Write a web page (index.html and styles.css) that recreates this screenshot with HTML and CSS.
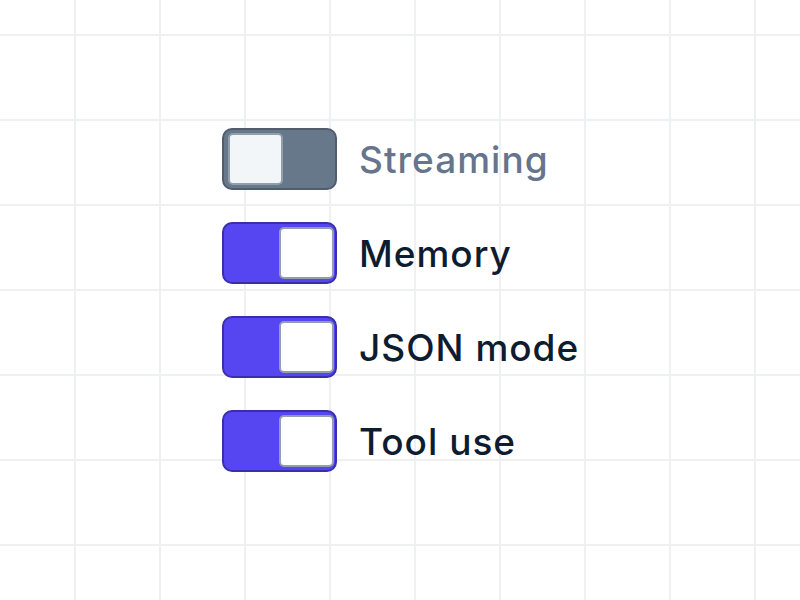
FILE: index.html
```html
<!DOCTYPE html>
<html>
<head>
<meta charset="utf-8">
<link rel="stylesheet" href="styles.css">
</head>
<body>
<div class="canvas">
  <ul class="list">
    <li class="row">
      <span class="toggle off"><span class="knob"></span></span>
      <span class="label muted">Streaming</span>
    </li>
    <li class="row">
      <span class="toggle on"><span class="knob"></span></span>
      <span class="label">Memory</span>
    </li>
    <li class="row">
      <span class="toggle on"><span class="knob"></span></span>
      <span class="label">JSON mode</span>
    </li>
    <li class="row">
      <span class="toggle on"><span class="knob"></span></span>
      <span class="label">Tool use</span>
    </li>
  </ul>
</div>
</body>
</html>
```
FILE: styles.css
```css
html, body {
  margin: 0;
  padding: 0;
}
body {
  width: 800px;
  height: 600px;
  background-color: #ffffff;
  background-image:
    linear-gradient(to right, #eef0f2 2px, transparent 2px),
    linear-gradient(to bottom, #eef0f2 2px, transparent 2px);
  background-size: 85px 85px;
  background-position: 74px 34px;
  font-family: Inter, "Noto Sans", sans-serif;
  overflow: hidden;
}
.canvas {
  padding: 128px 0 0 222px;
}
.list {
  list-style: none;
  margin: 0;
  padding: 0;
  display: flex;
  flex-direction: column;
  gap: 32px;
}
.row {
  display: flex;
  align-items: center;
  gap: 22px;
  height: 62px;
}
.toggle {
  box-sizing: border-box;
  width: 115px;
  height: 62px;
  border-radius: 10px;
  border: 2px solid;
  display: flex;
  align-items: center;
  padding: 0 4px;
}
.toggle.off {
  background: #66788a;
  border-color: #4f5d6d;
  justify-content: flex-start;
}
.toggle.on {
  background: #5646f2;
  border-color: #3a2fa8;
  justify-content: flex-end;
  padding-right: 1px;
}
.knob {
  box-sizing: border-box;
  width: 55px;
  height: 52px;
  border-radius: 5px;
  border: 2px solid #939eab;
  background: #ffffff;
}
.toggle.off .knob {
  background: #f3f6f9;
}
.label {
  font-size: 37px;
  font-weight: 500;
  color: #0e1c30;
  letter-spacing: 1px;
}
.label.muted {
  color: #66758c;
}
```
